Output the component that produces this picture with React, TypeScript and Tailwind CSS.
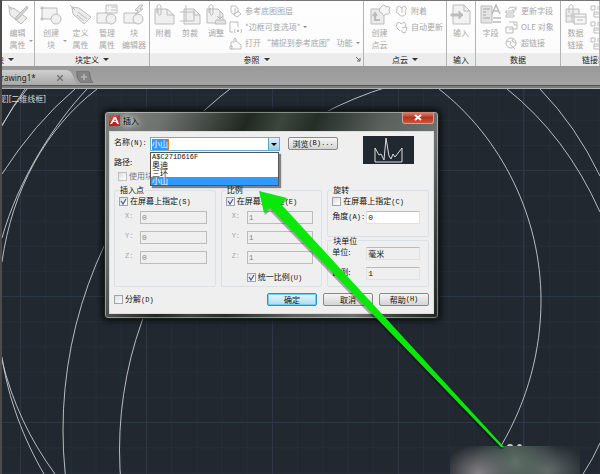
import React, { useState } from "react";

const ribbonFont = "font-['Noto_Sans','Noto_Sans_CJK_SC',sans-serif]";
const dialogFont = "font-['Noto_Sans_CJK_SC',sans-serif]";
const mono = "font-['Liberation_Mono','Noto_Sans_CJK_SC',monospace]";

/* ---------- ribbon icons ---------- */

const shapes: Record<string, React.ReactNode> = {
  tagEdit: (
    <>
      <path d="M2 3 8 5 20 14 14 20 3 11Z" fill="#ececec" />
      <path d="M1 1 5 6" />
      <path d="M20 2 9 13 8 16 11 15 21 4Z" fill="#d4d4d4" />
    </>
  ),
  create: (
    <>
      <path d="M2 4H17V15H2Z" fill="#f2f2f2" />
      <circle cx="16" cy="15" r="5" fill="#f0f0f0" />
      <path d="M1 3H3V5H1ZM1 14H3V16H1Z" />
    </>
  ),
  tag: (
    <>
      <path d="M2 3 9 4 21 13 14 20 3 10Z" fill="#ececec" />
      <path d="M0 1 5 6M8 8 17 15M7 11 14 17" />
    </>
  ),
  manage: (
    <>
      <path d="M1 9H12V19H1Z" fill="#f2f2f2" />
      <circle cx="15" cy="15" r="5" fill="#f0f0f0" />
      <path d="M10 1H21V9H10Z" fill="#f7f7f7" />
      <path d="M12 3H13M15 3H20M12 6H13M15 6H20" />
    </>
  ),
  editor: (
    <>
      <path d="M1 9H13V19H1Z" fill="#f2f2f2" />
      <circle cx="15" cy="15" r="5" fill="#f0f0f0" />
      <path d="M17 1 12 6 15 7 12 11 20 5 17 5 20 1Z" fill="#e4e4e4" />
    </>
  ),
  attach: (
    <>
      <path d="M2 5H14L21 11V20H2Z" fill="#efefef" />
      <path d="M14 5V11H21" />
      <path d="M4 9V2Q6 -1 8 2V10Q6 13 5 9V4" />
    </>
  ),
  clip: (
    <>
      <path d="M5 5H15L21 11V20H5Z" fill="#efefef" />
      <path d="M1 8H15V17H1M7 1V17M15 5V11H21" />
    </>
  ),
  adjust: (
    <>
      <path d="M2 5H13L18 10V19H2Z" fill="#efefef" />
      <path d="M4 9V2Q6 -1 8 2V10Q6 13 5 9V4" />
      <path d="M15 7V15M11 16H20L21 20H10ZM12 12 15 15 18 12" fill="#e2e2e2" />
    </>
  ),
  cloud: (
    <>
      <path d="M2 5H15V20H2Z" fill="#ebebeb" />
      <path d="M12 3Q15 -1 17 3Q22 1 20 6Q22 11 17 10Q14 13 13 9Q8 8 12 3Z" fill="#f6f6f6" />
      <path d="M6 11V16H11M4 12 6 9 8 12" strokeWidth="2" />
    </>
  ),
  insert: (
    <>
      <path d="M3 1H14L20 7V20H3Z" fill="#f2f2f2" />
      <path d="M14 1V7H20" />
      <path d="M1 10H9V7L13 11 9 15V12H1Z" fill="#bdbdbd" />
    </>
  ),
  field: (
    <>
      <path d="M1 2H12V19H1Z" fill="#e4e4e4" />
      <path d="M3 5H10M3 8H6M3 11H6M3 14H10" strokeWidth="1.5" />
      <path d="M12 10 16 1 20 10M13 7H18M13 14H21M13 18H21" strokeWidth="1.5" />
    </>
  ),
  datalink: (
    <>
      <path d="M1 5H14V18H1Z" fill="#ececec" />
      <path d="M4 9V2Q6 -1 8 2V10M1 12H14M7 9V18" />
      <path d="M9 10H21V20H9ZM9 13H21M12 16H18" fill="#f5f5f5" />
    </>
  ),
};

const smallShapes: Record<string, React.ReactNode> = {
  layers: <path d="M2 1H7L9 4V8M2 1V7Q4 11 6 8V3M5 10 9 6 12 9 8 12Z" />,
  frame: <path d="M1 1H9V6M1 1V11H4M6 8Q5 10 6 12M12 8Q13 10 12 12M8 9 10 11M10 9 8 11" />,
  snap: <path d="M2 10V5H5V2Q6 0 7 2V5M7 4 12 8V12H2M1 9H3V12H1Z" />,
  cloudClip: <path d="M2 2Q5 0 6 3L10 1Q13 4 10 6Q12 10 8 11Q5 12 4 9Q0 8 2 5ZM7 3V8" />,
  cloudSync: <path d="M2 2Q5 0 6 3L9 1Q12 3 10 6M2 2Q0 6 3 8L5 10M7 7 12 6 11 10M6 9 8 12 11 11" />,
  refresh: <path d="M1 6H9V8H1ZM1 10H9V12H1ZM3 4Q7 0 11 4M11 1V5H7" />,
  ole: <path d="M4 1H12V8H9M1 6H8V12H1ZM4 8H9M9 1V4H12" />,
  globe: (
    <>
      <circle cx="6" cy="6" r="5" />
      <path d="M2 4 6 5 5 8M8 2 7 4 11 6M6 8 10 12" />
    </>
  ),
  sheet: <path d="M1 1H5V5H1ZM7 2H12M7 4H12M4 7H12V12H4ZM4 9H12" />,
};

function BigIcon({ name }: { name: string }) {
  return (
    <svg viewBox="0 0 22 21" className="h-[21px] w-[22px] shrink-0" fill="none" stroke="#bcbcbc">
      {shapes[name]}
    </svg>
  );
}

function Big({ icon, lines, width, menu }: { icon: string; lines: string[]; width: string; menu?: boolean }) {
  return (
    <button className={`relative flex shrink-0 flex-col items-center pt-[3px] ${width}`}>
      <BigIcon name={icon} />
      <span className="mt-[2px] flex flex-col text-[8px] leading-[12px] whitespace-nowrap text-[#a8a8a8]">
        {lines.map((l) => (
          <span key={l}>{l}</span>
        ))}
      </span>
      {menu && <Caret className="absolute right-0 bottom-[9px] border-t-[#9a9a9a]" />}
    </button>
  );
}

function Caret({ className }: { className: string }) {
  return <span className={`h-0 w-0 border-x-2 border-t-2 border-x-transparent ${className}`} />;
}

function Small({ icon, text, menu }: { icon: string; text?: string; menu?: boolean }) {
  return (
    <button className={`flex h-4 items-center gap-[3px] text-[8px] leading-4 whitespace-nowrap text-[#a8a8a8] ${dialogFont}`}>
      <svg viewBox="0 0 13 13" className="h-[13px] w-[13px] shrink-0" fill="none" stroke="#bdbdbd">
        {smallShapes[icon]}
      </svg>
      {text}
      {menu && <Caret className="border-t-[#888]" />}
    </button>
  );
}

function Panel({
  width,
  title,
  menu,
  launcher,
  titleClass = "justify-center",
  children,
}: {
  width: string;
  title: string;
  menu?: boolean;
  launcher?: boolean;
  titleClass?: string;
  children: React.ReactNode;
}) {
  return (
    <section className={`flex flex-col overflow-hidden border-r border-[#b4b4b4] ${width}`}>
      <div className="flex h-[52px] items-start bg-gradient-to-b from-white to-[#fbfbfb]">{children}</div>
      <div className={`relative flex h-[13px] items-center gap-1 bg-[#ececec] text-[8px] leading-[13px] whitespace-nowrap text-[#222] ${titleClass}`}>
        {title}
        {menu && <span className="h-0 w-0 border-x-[3px] border-t-[3px] border-x-transparent border-t-[#333]" />}
        {launcher && (
          <svg viewBox="0 0 5 5" className="absolute right-[2px] h-[5px] w-[5px]" fill="none" stroke="#666">
            <path d="M0 0 4 4M4 1V4H1" />
          </svg>
        )}
      </div>
    </section>
  );
}

function Ribbon() {
  return (
    <header className="flex overflow-hidden border-t border-[#777] bg-white">
      <Panel width="w-[33px] shrink-0" title="块" menu titleClass="-ml-[6px] justify-start">
        <Big icon="tagEdit" lines={["编辑", "属性"]} width="w-[31px]" menu />
      </Panel>
      <Panel width="w-[115px] shrink-0" title="块定义" menu>
        <Big icon="create" lines={["创建", "块"]} width="w-8" menu />
        <Big icon="tag" lines={["定义", "属性"]} width="w-[27px]" />
        <Big icon="manage" lines={["管理", "属性"]} width="w-[26px]" />
        <Big icon="editor" lines={["块", "编辑器"]} width="w-[28px]" />
      </Panel>
      <Panel width="w-[214px] shrink-0" title="参照" menu launcher>
        <Big icon="attach" lines={["附着"]} width="w-[27px]" />
        <Big icon="clip" lines={["剪裁"]} width="w-[26px]" />
        <Big icon="adjust" lines={["调整"]} width="w-[26px]" />
        <div className="flex flex-col pt-[2px]">
          <Small icon="layers" text="参考底图图层" />
          <Small icon="frame" text="*边框可变选项*" menu />
          <Small icon="snap" text="打开 “捕捉到参考底图” 功能" menu />
        </div>
      </Panel>
      <Panel width="w-[83px] shrink-0" title="点云" menu>
        <Big icon="cloud" lines={["创建", "点云"]} width="w-[31px]" />
        <div className="flex flex-col pt-[2px]">
          <Small icon="cloudClip" text="附着" />
          <Small icon="cloudSync" text="自动更新" />
        </div>
      </Panel>
      <Panel width="w-[29px] shrink-0" title="输入">
        <Big icon="insert" lines={["输入"]} width="w-[28px]" />
      </Panel>
      <Panel width="w-[85px] shrink-0" title="数据">
        <Big icon="field" lines={["字段"]} width="w-[29px]" />
        <div className="flex flex-col pt-[2px]">
          <Small icon="refresh" text="更新字段" />
          <Small icon="ole" text="OLE 对象" />
          <Small icon="globe" text="超链接" />
        </div>
      </Panel>
      <Panel width="flex-1" title="链接和提取" titleClass="justify-start pl-[21px]">
        <Big icon="datalink" lines={["数据", "链接"]} width="w-[29px]" />
        <div className="flex flex-col pt-[2px]">
          <Small icon="sheet" />
          <Small icon="sheet" />
          <Small icon="sheet" />
        </div>
      </Panel>
    </header>
  );
}

function TabBar() {
  return (
    <nav className="flex h-[23px] flex-col bg-[#989898]">
      <div className="flex h-[19px] items-end bg-gradient-to-b from-[#999] to-[#a4a4a4]">
        <div className="relative flex h-[15px] w-[78px] items-center text-[#222]">
          <svg viewBox="0 0 78 15" className="absolute inset-0 h-full w-full">
            <defs>
              <linearGradient id="tab" x2="0" y2="1">
                <stop stopColor="#cfcfcf" />
                <stop offset="1" stopColor="#a8a8a8" />
              </linearGradient>
            </defs>
            <path d="M0 0H64Q69 0 71 6Q73 13 78 15H0Z" fill="url(#tab)" />
          </svg>
          <a href="#drawing1" className="relative -ml-[7px] text-[8px] leading-[15px]">
            Drawing1*
          </a>
          <button aria-label="关闭" className="absolute right-[17px]">
            <svg viewBox="0 0 6 6" className="h-[6px] w-[6px]" stroke="#777" strokeWidth="1.5">
              <path d="M0 0 6 6M6 0 0 6" />
            </svg>
          </button>
        </div>
        <button aria-label="新建" className="-ml-1 pb-[2px]">
          <svg viewBox="0 0 17 12" className="h-3 w-[17px]">
            <path d="M1 0H11Q14 0 14 5Q15 10 17 12H7Q3 12 1 5Z" fill="#848484" stroke="#6e6e6e" />
            <path d="M8 3V9M5 6H11" stroke="#b5b5b5" strokeWidth="1.5" />
          </svg>
        </button>
      </div>
      <div className="h-[3px] border-t border-[#555] bg-[#7b7b7b]" />
      <div className="h-px bg-[#b0b0b0]" />
    </nav>
  );
}

/* ---------- drawing area ---------- */

function Drawing() {
  const offsets = Array.from({ length: 60 }, (_, i) => i);
  return (
    <svg viewBox="2 89 598 385" preserveAspectRatio="xMinYMin slice" className="absolute inset-0 h-full w-full" fill="none">
      {offsets.map((i) => (
        <path
          key={i}
          d={`M${20.5 + (i - 1) * 25.2} 0V900M0 ${95 + i * 25.2}H1200`}
          stroke="#262f3a"
          strokeWidth="1"
        />
      ))}
      <path d="M20.5 0V900M146.5 0V900M272.5 0V900M398.5 0V900M523.5 0V900M0 170.5H1200M0 296.5H1200M0 422.5H1200" stroke="#2d3645" />
      <g stroke="#c9ccce" strokeWidth="0.9">
        <path d="M25 89Q12 107 2 126M27 89Q13 106 2 125" />
        <path d="M75 89Q34 124 2 174" />
        <path d="M87 89C54 124 18 180 2 238" />
        <path d="M97 89C46 128 12 190 2 262" />
        <path d="M2 357C8 398 24 440 44 474M2 360C12 402 30 440 55 474" />
        <path d="M439 89C502 138 541 218 541 300C541 350 528 400 501 446" />
        <path d="M507 89Q566 136 600 212" />
        <path d="M540 89Q576 126 600 176" />
        <path d="M583 474Q593 459 600 443" />
        <circle cx="495" cy="430" r="432" clipPath="url(#left)" />
        <circle cx="499.500" cy="450" r="380" clipPath="url(#left)" />
      </g>
      <clipPath id="left">
        <path d="M0 80H400V480H0Z" />
      </clipPath>
    </svg>
  );
}

function Arrow() {
  return (
    <svg viewBox="2 89 598 385" preserveAspectRatio="xMinYMin slice" className="pointer-events-none absolute inset-0 h-full w-full">
      <path d="M260 193 288 199 281 206 504 449 500 449 270 211 265 215Z" fill="#000" opacity="0.3" />
      <path d="M259 191 287 198 281 204 504 447 501 447 270 208 264 213Z" fill="#0be60b" />
    </svg>
  );
}

/* ---------- dialog ---------- */

function Text({ cn, k = "" }: { cn: string; k?: string }) {
  return (
    <>
      {cn}
      {k && <span className={`text-[7px] ${mono}`}>{k}</span>}
    </>
  );
}

function Check({ cn, k, on, disabled }: { cn: string; k?: string; on?: boolean; disabled?: boolean }) {
  const [checked, setChecked] = useState(!!on);
  return (
    <label className={`flex h-[10px] items-center gap-[2px] whitespace-nowrap ${disabled ? "text-[#777]" : ""}`}>
      <span className="grid">
        <input
          type="checkbox"
          checked={checked}
          disabled={disabled}
          onChange={(e) => setChecked(e.target.checked)}
          className="col-start-1 row-start-1 h-[9px] w-[9px] appearance-none border border-[#a0a4a8] bg-gradient-to-br from-[#dcdfe2] to-white disabled:border-[#c0c0c0]"
        />
        {checked && (
          <svg viewBox="0 0 9 9" className="pointer-events-none col-start-1 row-start-1 h-[9px] w-[9px]" fill="none" stroke="#4a60b0" strokeWidth="1.3">
            <path d="M2 4 4 7 7 2" />
          </svg>
        )}
      </span>
      <span>
        <Text cn={cn} k={k} />
      </span>
    </label>
  );
}

function Axis({ label, value }: { label: string; value: string }) {
  return (
    <label className={`flex h-[13px] items-center text-[7px] text-[#a5a5a5] ${mono}`}>
      <span className="w-[15px] pb-[3px]">{label}</span>
      <input
        disabled
        defaultValue={value}
        className="h-[13px] min-w-0 flex-1 border border-[#bcbcbc] bg-[#efefef] px-px text-[8px] text-[#888]"
      />
    </label>
  );
}

function Value({ cn, k, value, readOnly }: { cn: string; k?: string; value: string; readOnly?: boolean }) {
  return (
    <label className="flex h-[13px] items-center">
      <span className="w-[34px] pb-[3px] whitespace-nowrap">
        <Text cn={cn} k={k} />
      </span>
      <input
        readOnly={readOnly}
        defaultValue={value}
        className={`h-[13px] min-w-0 flex-1 border border-[#e0e2e4] border-t-[#bbb] px-px text-[8px] ${readOnly ? "bg-[#efefef]" : "bg-white"} ${mono}`}
      />
    </label>
  );
}

function Group({ title, children }: { title: string; children: React.ReactNode }) {
  return (
    <fieldset className="min-w-0 rounded-[2px] border border-[#d8e0e8] pr-2 pb-1 pl-1">
      <legend className="px-px leading-[8px]">{title}</legend>
      <div className="flex flex-col pt-[2px]">{children}</div>
    </fieldset>
  );
}

function Push({ children, main }: { children: React.ReactNode; main?: boolean }) {
  return (
    <button
      className={`flex h-[13px] w-[50px] items-center justify-center rounded-[2px] border whitespace-nowrap ${
        main
          ? "border-[#2a93c4] bg-gradient-to-b from-[#e8f7fd] to-[#a9dcf3] ring-1 ring-[#6fd0f3] ring-inset"
          : "border-[#888] bg-gradient-to-b from-[#f5f5f5] to-[#d4d4d4]"
      }`}
    >
      {children}
    </button>
  );
}

function Dialog() {
  const options = ["A$C271D616F", "奥迪", "三环", "小山"];
  return (
    <div
      role="dialog"
      aria-label="插入"
      className={`absolute top-[22px] left-[102px] w-[335px] rounded-[4px] border border-[#1b1f1d] bg-[linear-gradient(115deg,#7d817e_0%,#6e7370_14%,#202820_34%,#3c463c_42%,#252d27_50%,#5b625e_66%,#6d726f_80%,#39423b_90%,#1e281f_100%)] px-1 pb-1 text-[8px] text-[#111] shadow-[0_0_6px_2px_rgba(0,0,0,0.7)] ring-1 ring-white/40 ring-inset ${dialogFont}`}
    >
      <div className="flex h-[19px] items-start">
        <svg viewBox="0 0 11 11" className="mt-[3px] h-[11px] w-[11px]">
          <path d="M0 0H11V11H0Z" fill="#d8433f" />
          <path d="M0 11V7L11 0V11Z" fill="#c01c20" />
          <path d="M1 9 5 2H7L10 9H8L7 7H4L3 9ZM5 6H7L6 4Z" fill="#fff" fillRule="evenodd" />
        </svg>
        <h1 className="mt-[3px] ml-[3px] flex-1 leading-[11px] text-black [text-shadow:0_0_5px_#fff,0_0_8px_#fff,0_0_12px_#ddd]">插入</h1>
        <button
          aria-label="关闭"
          className="flex h-3 w-[32px] items-center justify-center rounded-b-[3px] border border-t-0 border-[#c9a29a] bg-gradient-to-b from-[#d98b7c] via-[#b5331d] to-[#cf5537]"
        >
          <svg viewBox="0 0 8 7" className="h-[7px] w-2" stroke="#fff" strokeWidth="2">
            <path d="M1 1 7 6M7 1 1 6" />
          </svg>
        </button>
      </div>

      <div className="border border-[#ddd] bg-[#efefef] px-1 pt-1 pb-[7px]">
        <div className="flex items-start">
          <div className="w-[166px]">
            <div className="flex items-center">
              <label htmlFor="name" className="w-9 pb-[3px] leading-[11px] whitespace-nowrap">
                <Text cn="名称" k="(N):" />
              </label>
              <div className="relative flex h-[14px] flex-1 border border-[#6aaed6] bg-white">
                <div className="flex min-w-0 flex-1 items-center px-px">
                  <input
                    id="name"
                    defaultValue="小山"
                    className="h-[11px] w-[17px] border-r border-[#e08020] bg-[#3399ff] text-[8px] text-white outline-none"
                  />
                </div>
                <button aria-label="展开" className="flex w-[11px] items-center justify-center border-l border-[#5a9cc4] bg-gradient-to-b from-[#dff2fb] to-[#98cde8]">
                  <span className="h-0 w-0 border-x-[3px] border-t-[3px] border-x-transparent border-t-black" />
                </button>
                <ul role="listbox" className="absolute top-[14px] right-0 -left-px z-10 border border-[#555] bg-white shadow-[2px_2px_1px_rgba(0,0,0,0.45)]">
                  {options.map((o, i) => (
                    <li
                      key={o}
                      role="option"
                      aria-selected={i === 3}
                      className={`h-2 px-px leading-[8px] ${i === 3 ? "bg-[#3399ff] text-white" : ""} ${i === 0 ? `text-[7px] ${mono}` : ""}`}
                    >
                      {o}
                    </li>
                  ))}
                </ul>
              </div>
            </div>
            <p className="mt-[5px] h-[10px] leading-[10px]">路径:</p>
            <div className="mt-1 w-9 overflow-hidden pl-1">
              <Check cn="使用块编辑器" disabled />
            </div>
          </div>
          <div className="pt-px pl-2">
            <Push>
              <Text cn="浏览" k="(B)..." />
            </Push>
          </div>
          <svg viewBox="0 0 51 28" className="mr-[15px] ml-auto h-[28px] w-[51px] bg-[#212830]" fill="none" stroke="#dcdcdc">
            <path d="M12 26V12L16 19 18 18 21 24 23 2 26 20 28 23 30 18 32 21 39 12V26Z" />
          </svg>
        </div>

        <div className="mt-[5px] grid grid-cols-3 gap-[5px]">
          <Group title="插入点">
            <Check cn="在屏幕上指定" k="(S)" on />
            <div className="mt-[5px] flex flex-col gap-[7px] pl-[6px]">
              <Axis label="X:" value="0" />
              <Axis label="Y:" value="0" />
              <Axis label="Z:" value="0" />
            </div>
          </Group>
          <Group title="比例">
            <Check cn="在屏幕上指定" k="(E)" on />
            <div className="mt-[5px] flex flex-col gap-[7px] pl-[6px]">
              <Axis label="X:" value="1" />
              <Axis label="Y:" value="1" />
              <Axis label="Z:" value="1" />
            </div>
            <div className="mt-2 pl-[21px]">
              <Check cn="统一比例" k="(U)" on />
            </div>
          </Group>
          <div className="grid min-w-0 grid-rows-2">
            <Group title="旋转">
              <Check cn="在屏幕上指定" k="(C)" />
              <div className="mt-[5px]">
                <Value cn="角度" k="(A):" value="0" />
              </div>
            </Group>
            <Group title="块单位">
              <div className="flex flex-col gap-[7px]">
                <Value cn="单位:" value="毫米" readOnly />
                <Value cn="比例:" value="1" readOnly />
              </div>
            </Group>
          </div>
        </div>

        <div className="mt-[6px] flex items-center gap-[6px]">
          <div className="flex-1">
            <Check cn="分解" k="(D)" />
          </div>
          <Push main>确定</Push>
          <Push>取消</Push>
          <Push>
            <Text cn="帮助" k="(H)" />
          </Push>
        </div>
      </div>
    </div>
  );
}

export default function App() {
  return (
    <div className={`flex min-h-screen w-full flex-col overflow-hidden border-l-2 border-[#4b4b4b] bg-[#212830] ${ribbonFont}`}>
      <Ribbon />
      <TabBar />
      <main className="relative flex-1 overflow-hidden">
        <Drawing />
        <p className="relative -ml-1 pt-1 text-[8px] leading-[11px] text-[#d5d5d5]">视][二维线框]</p>
        <Dialog />
        <span className="absolute bottom-[25px] left-[505px] h-[5px] w-[6px] rounded-full bg-[#c4c4c4]" />
        <span className="absolute bottom-[25px] left-[515px] h-[5px] w-[5px] rounded-full bg-[#c4c4c4]" />
        <div className="absolute bottom-0 left-[448px] h-7 w-[130px] bg-[#252c32] bg-[radial-gradient(ellipse_35px_30px_at_22%_100%,#858286,transparent),radial-gradient(ellipse_42px_48px_at_50%_60%,#5f7166,transparent),radial-gradient(ellipse_40px_28px_at_75%_90%,#626a6a,transparent)]" />
        <Arrow />
      </main>
    </div>
  );
}
